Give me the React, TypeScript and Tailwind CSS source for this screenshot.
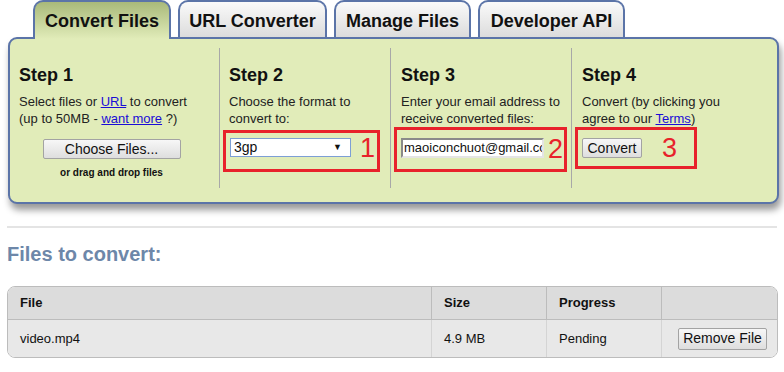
const tabs = [
  { label: "Convert Files", w: "w-[138px]", active: true },
  { label: "URL Converter", w: "w-[149px]", active: false },
  { label: "Manage Files", w: "w-[137px]", active: false },
  { label: "Developer API", w: "w-[147px]", active: false },
];

const GrayButton = ({ label, className }: { label: string; className: string }) => (
  <div
    className={`flex items-center justify-center border border-[#a3a3a3] rounded-[2px] bg-gradient-to-b from-[#f7f7f7] to-[#dedede] text-[#111] ${className}`}
  >
    {label}
  </div>
);

const StepTitle = ({ children }: { children: string }) => (
  <div className="font-bold text-[18px] leading-[22px] text-[#111]">{children}</div>
);

export default function App() {
  return (
    <div className="relative w-[784px] h-[372px] overflow-hidden bg-white font-['Liberation_Sans',Arial,sans-serif]">
      {/* tabs */}
      <div className="flex items-start h-[37px] pl-[33px] gap-[7px]">
        {tabs.map((t) =>
          t.active ? (
            <div
              key={t.label}
              className={`${t.w} relative z-10 h-[39px] border-2 border-b-0 border-[#5b74a8] rounded-t-[10px] bg-gradient-to-b from-[#a9b97a] to-[#e1ecb9] flex items-center justify-center pt-[1px] font-bold text-[18px] text-[#111]`}
            >
              {t.label}
            </div>
          ) : (
            <div
              key={t.label}
              className={`${t.w} h-[37px] border-2 border-b-0 border-[#5b74a8] rounded-t-[10px] bg-gradient-to-b from-[#fafafa] to-[#dcdcdc] flex items-center justify-center pt-[3px] font-bold text-[18px] text-[#111]`}
            >
              {t.label}
            </div>
          )
        )}
      </div>

      {/* steps panel */}
      <div className="ml-[8px] w-[771px] h-[167px] border-2 border-[#5b74a8] rounded-[9px] bg-[#e1ecb9] shadow-[2px_6px_7px_rgba(0,0,0,0.4)] flex pt-[9px] pb-[14px] text-[13px] leading-[17px] text-[#222]">
        <div className="w-[209px] pl-[9px] pt-[16px] pr-[18px]">
          <StepTitle>Step 1</StepTitle>
          <div className="mt-[7px]">
            Select files or <span className="text-[#1a0dd6] underline">URL</span> to convert
            <br />
            (up to 50MB - <span className="text-[#1a0dd6] underline">want more</span> ?)
          </div>
          <div className="flex flex-col items-center mt-[12px] pl-[3px]">
            <GrayButton label="Choose Files..." className="w-[138px] h-[20px] text-[14px]" />
            <div className="mt-[8px] font-bold text-[10px] leading-[12px] text-[#111]">or drag and drop files</div>
          </div>
        </div>

        <div className="w-[171px] border-l border-[#a8a8a8] pl-[9px] pt-[16px]">
          <StepTitle>Step 2</StepTitle>
          <div className="mt-[7px]">
            Choose the format to
            <br />
            convert to:
          </div>
          <div className="-ml-[6px] mt-[3px] w-[157px] h-[42px] border-[3px] border-[#e8222b] flex items-start pt-[5px] pl-[4px]">
            <div className="w-[121px] h-[19px] border border-[#7d9fd6] bg-white flex items-center justify-between pl-[3px] pr-[8px] text-[14px] text-[#111]">
              <span>3gp</span>
              <span className="text-[9px] leading-none">▼</span>
            </div>
            <span className="ml-[9px] -mt-[4px] text-[27px] leading-[28px] text-[#e8222b]">1</span>
          </div>
        </div>

        <div className="w-[181px] border-l border-[#a8a8a8] pl-[10px] pt-[16px]">
          <StepTitle>Step 3</StepTitle>
          <div className="mt-[7px]">
            Enter your email address to
            <br />
            receive converted files:
          </div>
          <div className="-ml-[7px] mt-0 w-[173px] h-[45px] border-[3px] border-[#e8222b] flex items-start pt-[8px] pl-[4px]">
            <div className="w-[143px] h-[20px] border-2 border-t-[#8a8a8a] border-l-[#8a8a8a] border-r-[#e4e4e4] border-b-[#e4e4e4] bg-white overflow-hidden whitespace-nowrap pl-[1px] text-[13px] leading-[16px] text-[#111]">
              maoiconchuot@gmail.co
            </div>
            <span className="ml-[4px] -mt-[3px] text-[27px] leading-[28px] text-[#e8222b]">2</span>
          </div>
        </div>

        <div className="flex-1 border-l border-[#a8a8a8] pl-[10px] pt-[16px]">
          <StepTitle>Step 4</StepTitle>
          <div className="mt-[7px]">
            Convert (by clicking you
            <br />
            agree to our <span className="text-[#1a0dd6] underline">Terms</span>)
          </div>
          <div className="-ml-[7px] mt-0 w-[122px] h-[42px] border-[3px] border-[#e8222b] flex items-start pt-[8px] pl-[4px]">
            <GrayButton label="Convert" className="w-[60px] h-[20px] text-[14px]" />
            <span className="ml-[20px] -mt-[4px] text-[27px] leading-[28px] text-[#e8222b]">3</span>
          </div>
        </div>
      </div>

      <div className="mt-[22px] ml-[7px] w-[770px] h-[2px] bg-[#e4e4e4]" />

      <div className="ml-[7px] mt-[14px] font-bold text-[20px] leading-[24px] text-[#6d87a9]">Files to convert:</div>

      {/* file table */}
      <div className="ml-[7px] mt-[20px] w-[771px] border border-[#bcbcbc] rounded-[8px] overflow-hidden text-[13px] text-[#111]">
        <div className="flex h-[33px] bg-[#dcdcdc] border-b border-[#bcbcbc] font-bold">
          <div className="w-[423px] pl-[12px] flex items-center">File</div>
          <div className="w-[115px] pl-[12px] flex items-center border-l border-[#bcbcbc]">Size</div>
          <div className="w-[115px] pl-[12px] flex items-center border-l border-[#bcbcbc]">Progress</div>
          <div className="flex-1 border-l border-[#bcbcbc]" />
        </div>
        <div className="flex h-[37px] bg-[#e8e8e8]">
          <div className="w-[423px] pl-[12px] flex items-center">video.mp4</div>
          <div className="w-[115px] pl-[12px] flex items-center border-l border-[#d4d4d4]">4.9 MB</div>
          <div className="w-[115px] pl-[12px] flex items-center border-l border-[#d4d4d4]">Pending</div>
          <div className="flex-1 border-l border-[#d4d4d4] flex items-center pl-[16px]">
            <GrayButton label="Remove File" className="w-[89px] h-[22px] text-[14px]" />
          </div>
        </div>
      </div>
    </div>
  );
}
